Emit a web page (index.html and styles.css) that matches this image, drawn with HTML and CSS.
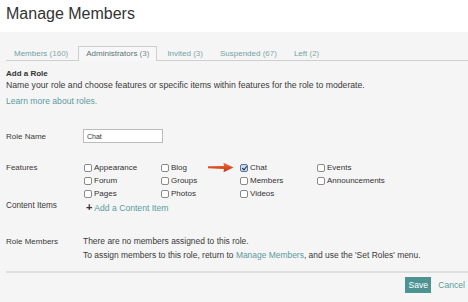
FILE: index.html
```html
<!DOCTYPE html>
<html lang="en">
<head>
    <meta charset="UTF-8">
    <meta name="viewport" content="width=device-width, initial-scale=1.0">
    <title>Manage Members</title>
    <link rel="stylesheet" href="styles.css">
</head>
<body>
    <div class="page-head">
        <h1>Manage Members</h1>
    </div>
    <div class="panel">
        <ul class="tabs">
            <li><a href="#">Members <span class="count">(160)</span></a></li>
            <li class="active"><a href="#">Administrators <span class="count">(3)</span></a></li>
            <li><a href="#">Invited <span class="count">(3)</span></a></li>
            <li><a href="#">Suspended <span class="count">(67)</span></a></li>
            <li><a href="#">Left <span class="count">(2)</span></a></li>
        </ul>

        <div class="role-form">
            <h2>Add a Role</h2>
            <p class="intro">Name your role and choose features or specific items within features for the role to moderate.</p>
            <p class="learn"><a href="#">Learn more about roles.</a></p>

            <div class="form-row row-name">
                <label for="role-name">Role Name</label>
                <input type="text" id="role-name" value="Chat">
            </div>

            <div class="form-row row-features">
                <span class="row-label">Features</span>
                <div class="features">
                    <label class="check"><span class="box"></span>Appearance</label>
                    <label class="check"><span class="box"></span>Blog</label>
                    <label class="check chat"><span class="box checked"></span>Chat
                        <svg class="arrow" width="26" height="11" viewBox="0 0 26 11">
                            <defs>
                                <linearGradient id="ar" x1="0" y1="0" x2="0" y2="1">
                                    <stop offset="0" stop-color="#ef6a3a"/>
                                    <stop offset="1" stop-color="#c7330f"/>
                                </linearGradient>
                            </defs>
                            <path d="M0 4.3 L16 4.1 L15.5 0.8 L25.5 5.5 L15.5 10.2 L16 6.9 L0 6.2 Z" fill="url(#ar)"/>
                        </svg>
                    </label>
                    <label class="check"><span class="box"></span>Events</label>
                    <label class="check"><span class="box"></span>Forum</label>
                    <label class="check"><span class="box"></span>Groups</label>
                    <label class="check"><span class="box"></span>Members</label>
                    <label class="check"><span class="box"></span>Announcements</label>
                    <label class="check"><span class="box"></span>Pages</label>
                    <label class="check"><span class="box"></span>Photos</label>
                    <label class="check"><span class="box"></span>Videos</label>
                </div>
            </div>

            <div class="form-row row-content">
                <span class="row-label">Content Items</span>
                <a href="#" class="add-item"><span class="plus">+</span> Add a Content Item</a>
            </div>

            <div class="form-row row-members">
                <span class="row-label">Role Members</span>
                <div class="members-info">
                    <p>There are no members assigned to this role.</p>
                    <p>To assign members to this role, return to <a href="#">Manage Members</a>, and use the 'Set Roles' menu.</p>
                </div>
            </div>
        </div>

        <div class="actions">
            <button type="submit" class="save">Save</button>
            <a href="#" class="cancel">Cancel</a>
        </div>
    </div>
</body>
</html>
```

FILE: styles.css
```css
body {
    margin: 0;
    padding: 0;
    font-family: "Liberation Sans", Arial, sans-serif;
    font-size: 8px;
    color: #3a3a3a;
    background-color: #f5f5f5;
}
a {
    color: #5a9c9e;
    text-decoration: none;
}
p {
    margin: 0;
}
.page-head {
    background: #fff;
    height: 32px;
}
.page-head h1 {
    margin: 0;
    padding: 4px 0 0 6px;
    font-size: 16px;
    font-weight: normal;
    line-height: 20px;
    color: #333;
}
.panel {
    padding: 0 0 0 6px;
}
.tabs {
    list-style: none;
    margin: 0;
    padding: 14px 0 0 1px;
    display: flex;
    gap: 3px;
    border-bottom: 1px solid #cfcfcf;
}
.tabs li a {
    display: block;
    padding: 0 6px;
    height: 13px;
    line-height: 13px;
    border: 1px solid transparent;
    border-bottom: none;
    color: #6fa3a4;
}
.tabs .count {
    color: #8aa9aa;
}
.tabs li.active a {
    background: #f7f7f7;
    border-color: #cfcfcf;
    color: #5b7475;
    margin-bottom: -1px;
    height: 14px;
    padding: 0 7px;
}
.tabs li.active .count {
    color: #7c8f8f;
}
.role-form h2 {
    margin: 7px 0 0;
    font-size: 8px;
    font-weight: bold;
    line-height: 11px;
    color: #333;
}
.intro {
    margin-top: 1px;
    line-height: 11px;
    font-size: 8.7px;
}
.learn {
    margin-top: 5px;
    line-height: 11px;
    font-size: 8.6px;
}
.form-row {
    display: grid;
    grid-template-columns: 77px 1fr;
    align-items: start;
}
.row-label,
.form-row > label {
    line-height: 13px;
}
.row-name {
    margin-top: 22px;
    align-items: center;
}
.row-name input {
    width: 80px;
    height: 14px;
    box-sizing: border-box;
    border: 1px solid #bcbcbc;
    background: #fff;
    font-family: inherit;
    font-size: 7px;
    padding: 0 3px;
    color: #333;
}
.row-features {
    margin-top: 18px;
}
.features {
    display: grid;
    grid-template-columns: 77px 79px 77px auto;
    grid-auto-rows: 13px;
    padding-left: 1px;
}
.check {
    display: flex;
    align-items: center;
    gap: 2px;
    line-height: 13px;
    color: #333;
    position: relative;
}
.box {
    width: 8px;
    height: 8px;
    box-sizing: border-box;
    border: 1px solid #8a8a8a;
    border-radius: 2px;
    background: #fff;
}
.box.checked {
    background: #c9d9f0;
    border-color: #5d7696;
    position: relative;
}
.box.checked::after {
    content: "";
    position: absolute;
    left: 2px;
    top: 0;
    width: 2px;
    height: 4px;
    border: solid #1f2f4a;
    border-width: 0 1.5px 1.5px 0;
    transform: rotate(40deg);
}
.arrow {
    position: absolute;
    left: -32px;
    top: 1px;
}
.row-content {
    margin-top: -1px;
}
.row-content .row-label {
    font-size: 8.2px;
}
.add-item {
    display: block;
    margin-top: 3px;
    padding-left: 3px;
    line-height: 11px;
    font-size: 8.6px;
}
.plus {
    font-size: 11px;
    font-weight: bold;
    color: #333;
}
.row-members {
    margin-top: 22px;
}
.row-members .row-label {
    line-height: 11px;
}
.members-info {
    font-size: 8.45px;
}
.members-info p {
    line-height: 11px;
    margin-bottom: 3px;
}
.actions {
    margin-top: 7px;
    border-top: 2px solid #dedede;
    display: flex;
    justify-content: flex-end;
    align-items: center;
    gap: 7px;
    padding-top: 4px;
}
.save {
    background: #4e9394;
    color: #fff;
    border: none;
    font-family: inherit;
    font-size: 8.6px;
    height: 16px;
    width: 26px;
    padding: 0;
    cursor: pointer;
}
.cancel {
    font-size: 8.6px;
    margin-right: 3px;
}
```
